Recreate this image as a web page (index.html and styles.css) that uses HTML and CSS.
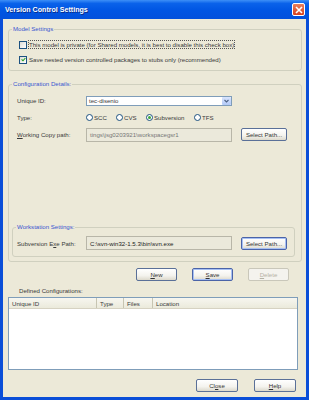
FILE: index.html
```html
<!DOCTYPE html>
<html lang="en">
<head>
    <meta charset="UTF-8">
    <title>Version Control Settings</title>
    <link rel="stylesheet" href="styles.css">
</head>
<body>
    <div class="window">
        <div class="titlebar">
            <span class="title">Version Control Settings</span>
            <span class="close-box">
                <svg width="8" height="8" viewBox="0 0 8 8"><path d="M1 1 L7 7 M7 1 L1 7" stroke="#fff" stroke-width="1.6"/></svg>
            </span>
        </div>

        <div class="content">
            <fieldset class="group model">
                <legend>Model Settings</legend>
                <div class="check-row">
                    <span class="checkbox"></span>
                    <span class="focused">This model is private (for Shared models, it is best to disable this check box)</span>
                </div>
                <div class="check-row">
                    <span class="checkbox">
                        <svg width="5" height="5" viewBox="0 0 5 5"><path d="M0.6 2.4 L2 3.8 L4.4 1" stroke="#21a121" stroke-width="1.1" fill="none"/></svg>
                    </span>
                    <span>Save nested version controlled packages to stubs only (recommended)</span>
                </div>
            </fieldset>

            <fieldset class="group config">
                <legend>Configuration Details:</legend>
                <div class="row">
                    <span class="row-label">Unique ID:</span>
                    <div class="combo">
                        <span class="combo-text">tec-disenio</span>
                        <span class="combo-btn">
                            <svg width="5" height="4" viewBox="0 0 5 4"><path d="M0.5 1 L2.5 3 L4.5 1" stroke="#4d6185" stroke-width="1.1" fill="none"/></svg>
                        </span>
                    </div>
                </div>
                <div class="row">
                    <span class="row-label">Type:</span>
                    <div class="radios">
                        <span class="radio-item"><span class="radio"></span>SCC</span>
                        <span class="radio-item"><span class="radio"></span>CVS</span>
                        <span class="radio-item"><span class="radio checked"></span>Subversion</span>
                        <span class="radio-item"><span class="radio"></span>TFS</span>
                    </div>
                </div>
                <div class="row">
                    <span class="row-label"><u>W</u>orking Copy path:</span>
                    <div class="textbox muted">tings\jsg0203921\workspacegsr1</div>
                    <button class="btn path-btn">Select Path...</button>
                </div>

                <fieldset class="group workstation">
                    <legend>Workstation Settings:</legend>
                    <div class="row">
                        <span class="row-label">Subversion E<u>x</u>e Path:</span>
                        <div class="textbox">C:\svn-win32-1.5.3\bin\svn.exe</div>
                        <button class="btn path-btn hot">Select Path...</button>
                    </div>
                </fieldset>
            </fieldset>

            <div class="actions">
                <button class="btn"><u>N</u>ew</button>
                <button class="btn default"><u>S</u>ave</button>
                <button class="btn" disabled><u>D</u>elete</button>
            </div>

            <div class="list-label">Defined Configurations:</div>
            <div class="listview">
                <div class="list-header">
                    <span class="col col-id">Unique ID</span>
                    <span class="col col-type">Type</span>
                    <span class="col col-files">Files</span>
                    <span class="col col-loc">Location</span>
                </div>
            </div>

            <div class="footer">
                <button class="btn wide">Cl<u>o</u>se</button>
                <button class="btn wide"><u>H</u>elp</button>
            </div>
        </div>
    </div>
</body>
</html>
```

FILE: styles.css
```css
body {
    margin: 0;
    font-family: "Liberation Sans", Arial, sans-serif;
    font-size: 6.1px;
    color: #3a3a3a;
    background: #fff;
}
.window {
    width: 309px;
    height: 400px;
    box-sizing: border-box;
    background: #0a4ed8;
    padding: 0 3px 3px 3px;
    display: flex;
    flex-direction: column;
}
.titlebar {
    height: 19px;
    margin: 0 -3px;
    padding: 0 3px 0 5px;
    display: flex;
    align-items: center;
    justify-content: space-between;
    background: linear-gradient(#3d8ff7 0%, #0a62ea 18%, #0055e3 55%, #0250dc 100%);
}
.title {
    color: #fff;
    font-weight: bold;
    font-size: 7.1px;
    text-shadow: 1px 1px 0 #0a2d8a;
}
.close-box {
    width: 11px;
    height: 11px;
    margin-right: 1px;
    border: 1px solid #fff;
    border-radius: 2px;
    background: linear-gradient(#e9805d, #d8401c);
    display: flex;
    align-items: center;
    justify-content: center;
}
.content {
    flex: 1;
    background: #ece9d8;
    padding: 0 4px 0 5px;
    display: flex;
    flex-direction: column;
}

/* group boxes: no side padding so the legend sits near the corner */
.group {
    margin: 0;
    border: 1px solid #d0d0bf;
    border-radius: 3px;
    min-width: 0;
    padding-left: 0;
    padding-right: 0;
}
.group legend {
    color: #3a55d0;
    line-height: 8px;
    padding: 0 1px;
    margin-left: 3px;
}
.model {
    margin-top: 6px;
    padding-top: 4px;
    padding-bottom: 3px;
}
.check-row {
    height: 15px;
    padding-left: 10px;
    display: flex;
    align-items: center;
    gap: 2px;
}
.checkbox {
    width: 6px;
    height: 6px;
    border: 1px solid #1c5180;
    background: linear-gradient(135deg, #dcdcd6, #fff);
    display: flex;
    align-items: center;
    justify-content: center;
}
.focused {
    outline: 1px dotted #555;
    outline-offset: 0;
}
.config {
    margin-top: 9px;
    padding-top: 4px;
    padding-bottom: 4px;
}
.row {
    height: 17px;
    padding-left: 8px;
    display: flex;
    align-items: center;
}
.row-label {
    width: 69px;
    flex: none;
}
.combo {
    width: 146px;
    height: 10px;
    box-sizing: border-box;
    border: 1px solid #7f9db9;
    background: #fff;
    display: flex;
    align-items: center;
    justify-content: space-between;
}
.combo-text {
    padding-left: 2px;
}
.combo-btn {
    width: 9px;
    height: 8px;
    background: linear-gradient(#d9e5fd, #b2c9f7);
    border-radius: 1px;
    display: flex;
    align-items: center;
    justify-content: center;
}
.radios {
    display: grid;
    grid-template-columns: 30px 30px 48px auto;
    align-items: center;
}
.radio-item {
    display: flex;
    align-items: center;
    gap: 1px;
}
.radio {
    width: 5px;
    height: 5px;
    border: 1px solid #1c5180;
    border-radius: 50%;
    background: #fff;
    display: flex;
    align-items: center;
    justify-content: center;
}
.radio.checked::after {
    content: "";
    width: 3px;
    height: 3px;
    border-radius: 50%;
    background: #3aa53a;
}
.textbox {
    width: 146px;
    height: 14px;
    box-sizing: border-box;
    border: 1px solid #b8b6a8;
    background: #ebe9db;
    padding-left: 3px;
    display: flex;
    align-items: center;
    color: #222;
}
.textbox.muted {
    color: #777;
}
.workstation {
    margin: 80px 6px 0 3px;
    padding-top: 4px;
    padding-bottom: 5px;
}
.workstation .row {
    padding-left: 4px;
    height: 16px;
}

/* buttons */
.btn {
    font-family: inherit;
    font-size: inherit;
    color: #333;
    height: 13px;
    padding: 0;
    border: 1px solid #5a7098;
    border-radius: 2px;
    background: linear-gradient(#fff 0%, #f4f3ee 60%, #dcd9cc 100%);
    box-sizing: border-box;
}
.btn.default,
.btn.hot {
    border-color: #4b64a8;
    box-shadow: inset 0 0 0 1px #a7c0f3;
}
.btn:disabled {
    color: #b4b2a5;
    border-color: #c9c7ba;
    background: #f4f3ee;
}
.path-btn {
    width: 46px;
    margin-left: 9px;
}
.actions {
    margin-top: 6px;
    padding-right: 13px;
    display: flex;
    justify-content: flex-end;
    gap: 15px;
}
.actions .btn {
    width: 41px;
}
.list-label {
    margin-top: 6px;
    padding-left: 11px;
    line-height: 8px;
}
.listview {
    margin: 2px 4px 0 0;
    height: 73px;
    box-sizing: border-box;
    border: 1px solid #7f9db9;
    background: #fff;
}
.list-header {
    height: 10px;
    display: flex;
    background: linear-gradient(#f7f6f0, #ebeadb);
    border-bottom: 1px solid #d6d2c2;
}
.col {
    display: flex;
    align-items: center;
    padding-left: 3px;
    box-sizing: border-box;
    border-right: 1px solid #c7c5b2;
}
.col-id { width: 88px; }
.col-type { width: 27px; }
.col-files { width: 29px; }
.col-loc { flex: 1; border-right: none; }
.footer {
    margin-top: 9px;
    padding-right: 6px;
    display: flex;
    justify-content: flex-end;
    gap: 16px;
}
.footer .btn {
    width: 42px;
}
```
